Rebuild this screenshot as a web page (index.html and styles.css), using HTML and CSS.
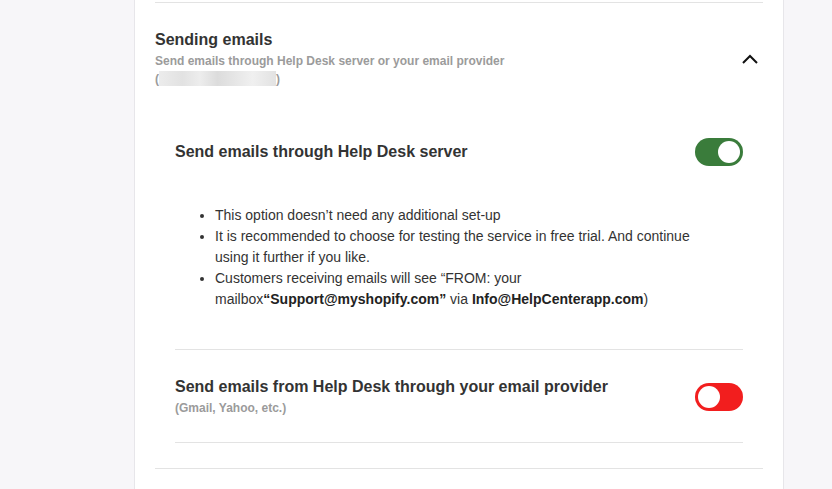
FILE: index.html
```html
<!doctype html>
<html lang="en">
  <head>
    <meta charset="utf-8">
    <meta name="viewport" content="width=device-width, initial-scale=1">
    <title>Email Settings</title>
    <link rel="stylesheet" href="styles.css">
  </head>
  <body>
    <div class="page">
      <div class="card">
        <div class="section">
          <div class="section-header">
            <div class="section-text">
              <h2>Sending emails</h2>
              <p class="muted">Send emails through Help Desk server or your email provider<br>(<span class="blurred"></span>)</p>
            </div>
            <svg class="chevron" width="18" height="12" viewBox="0 0 18 12">
              <polyline points="2,10 9,3 16,10" fill="none" stroke="#111" stroke-width="2"></polyline>
            </svg>
          </div>

          <div class="option">
            <div class="option-row">
              <h3>Send emails through Help Desk server</h3>
              <span class="toggle on"></span>
            </div>
            <ul class="notes">
              <li>This option doesn’t need any additional set-up</li>
              <li>It is recommended to choose for testing the service in free trial. And continue using it further if you like.</li>
              <li>Customers receiving emails will see “FROM: your mailbox<b>“Support@myshopify.com”</b> via <b>Info@HelpCenterapp.com</b>)</li>
            </ul>
          </div>

          <div class="option option-last">
            <div class="option-row">
              <div>
                <h3>Send emails from Help Desk through your email provider</h3>
                <p class="muted option-sub">(Gmail, Yahoo, etc.)</p>
              </div>
              <span class="toggle off"></span>
            </div>
          </div>
        </div>
      </div>
    </div>
  </body>
</html>
```

FILE: styles.css
```css
/* Reset */
* {
  margin: 0;
  padding: 0;
  box-sizing: border-box;
}

body {
  background-color: #f7f6f9;
  font-family: "Liberation Sans", Arial, sans-serif;
  color: #333;
}

/* Page layout */
.page {
  padding-left: 134px;
  height: 489px;
  overflow: hidden;
}

.card {
  width: 650px;
  min-height: 489px;
  background-color: #fff;
  border-left: 1px solid #e7e6ea;
  border-right: 1px solid #e7e6ea;
  padding: 2px 20px 0;
}

/* Section */
.section {
  border-top: 1px solid #e3e3e3;
  border-bottom: 1px solid #e3e3e3;
  padding: 27px 0 25px;
}

.section-header {
  display: flex;
  justify-content: space-between;
  align-items: center;
}

h2 {
  font-size: 16px;
  line-height: 20px;
  font-weight: bold;
  margin-bottom: 2px;
}

.muted {
  font-size: 12px;
  line-height: 18px;
  font-weight: bold;
  color: #9b9b9b;
}

.blurred {
  display: inline-block;
  width: 117px;
  height: 15px;
  vertical-align: -3px;
  background: linear-gradient(90deg, #ececec 0%, #e2e2e2 20%, #ededed 35%, #dcdcdc 50%, #e6e6e6 65%, #f0f0f0 80%, #e2e2e2 100%);
}

.chevron {
  margin-right: 4px;
}

/* Options */
.option {
  margin: 0 20px;
  padding: 50px 0 39px;
  border-bottom: 1px solid #e3e3e3;
}

.option-last {
  padding: 26px 0 25px;
}

.option-row {
  display: flex;
  justify-content: space-between;
  align-items: center;
}

h3 {
  font-size: 16px;
  line-height: 22px;
  font-weight: bold;
}

.option-sub {
  margin-top: 1px;
}

.notes {
  margin-top: 39px;
  padding: 0 40px;
  font-size: 14px;
  line-height: 21px;
}

.notes b {
  color: #222;
}

/* Toggle switch */
.toggle {
  position: relative;
  flex: none;
  width: 48px;
  height: 28px;
  border-radius: 14px;
}

.toggle::after {
  content: "";
  position: absolute;
  top: 3px;
  width: 22px;
  height: 22px;
  border-radius: 50%;
  background-color: #fff;
}

.toggle.on {
  background-color: #3a7c3b;
}

.toggle.on::after {
  right: 3px;
}

.toggle.off {
  background-color: #f21e1e;
}

.toggle.off::after {
  left: 3px;
}
```
